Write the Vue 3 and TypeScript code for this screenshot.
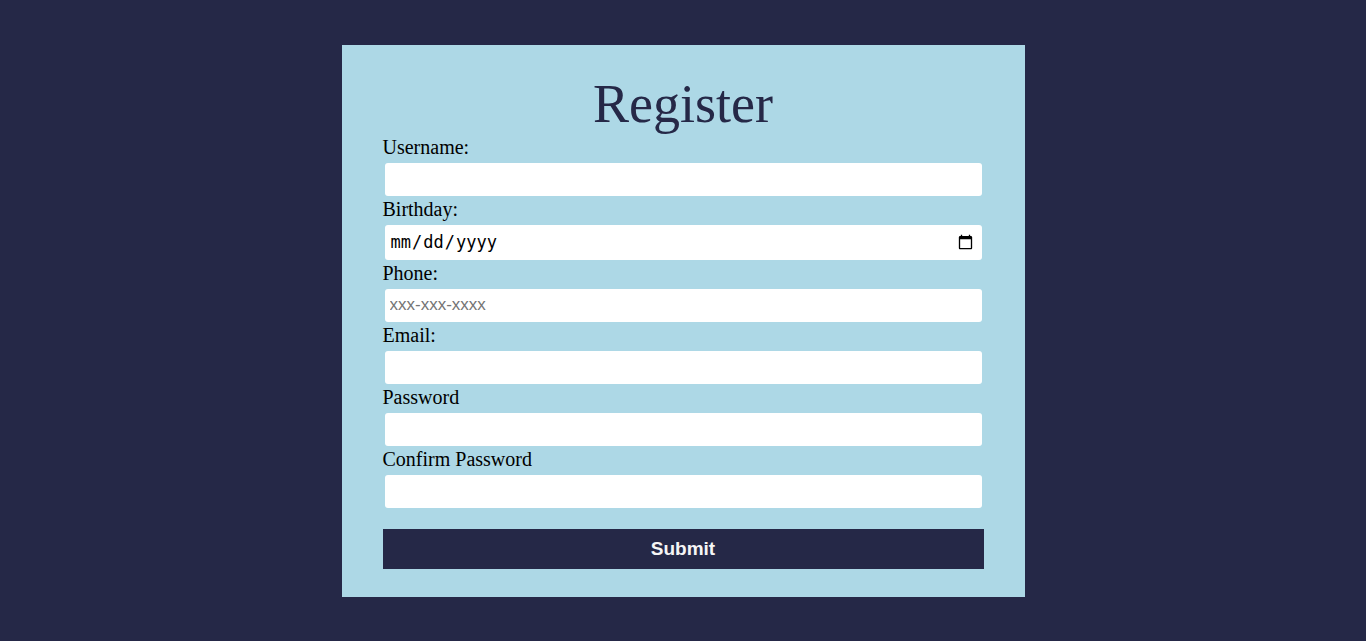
<script setup lang="ts">
interface Field {
  id: string
  label: string
  type: string
  placeholder?: string
}

const fields: Field[] = [
  { id: 'username', label: 'Username:', type: 'text' },
  { id: 'birthday', label: 'Birthday:', type: 'date' },
  { id: 'phone', label: 'Phone:', type: 'tel', placeholder: 'xxx-xxx-xxxx' },
  { id: 'email', label: 'Email:', type: 'email' },
  { id: 'password', label: 'Password', type: 'password' },
  { id: 'confirm', label: 'Confirm Password', type: 'password' },
]
</script>

<template>
  <main class="page">
    <form class="card" @submit.prevent>
      <h1 class="title">Register</h1>
      <div v-for="f in fields" :key="f.id" class="field">
        <label class="label" :for="f.id">{{ f.label }}</label>
        <input :id="f.id" class="input" :type="f.type" :placeholder="f.placeholder" />
      </div>
      <button class="submit" type="submit">Submit</button>
    </form>
  </main>
</template>

<style>
body {
  margin: 0;
  background: #252847;
}
</style>

<style scoped>
.page {
  min-height: 100vh;
  display: flex;
  align-items: center;
  justify-content: center;
  font-family: "Liberation Serif", "Times New Roman", serif;
}
.card {
  box-sizing: border-box;
  width: 50%;
  padding: 28px 41px;
  background: #add8e6;
}
.title {
  margin: 0 0 2px;
  font-size: 54px;
  line-height: 62px;
  font-weight: 400;
  text-align: center;
  color: #252847;
}
.field {
  display: flex;
  flex-direction: column;
}
.label {
  font-size: 20px;
  line-height: 21px;
  color: #000;
}
.input {
  box-sizing: border-box;
  min-height: 33px;
  margin: 5px 2px 3px;
  padding: 5px;
  border: 0;
  border-radius: 3px;
  background: #fff;
  font-family: "Liberation Sans", Arial, sans-serif;
  font-size: 17px;
}
.input[type="date"] {
  height: 35px;
  padding-right: 6px;
  font-family: "DejaVu Sans Mono", monospace;
}
.submit {
  display: block;
  width: 100%;
  height: 40px;
  margin-top: 18px;
  padding: 0;
  border: 0;
  background: #252847;
  color: #f5f5f5;
  font-family: "Liberation Sans", Arial, sans-serif;
  font-size: 19px;
  font-weight: 700;
}
</style>
